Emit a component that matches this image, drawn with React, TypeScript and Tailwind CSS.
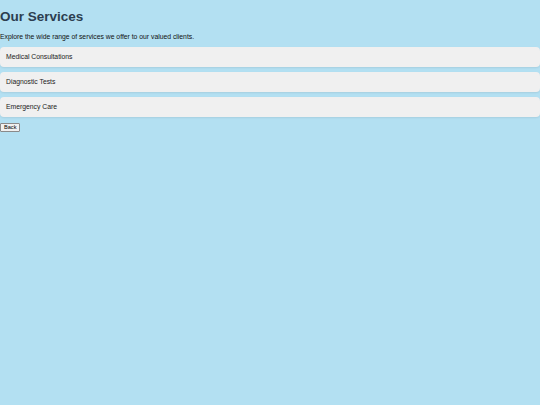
import React from "react";

export default function App() {
  const items = ["Medical Consultations", "Diagnostic Tests", "Emergency Care"];
  return (
    <div
      className="min-h-[405px] w-[540px] bg-[#b3e0f2] flex flex-col items-start"
      style={{ fontFamily: '"Liberation Sans", Arial, sans-serif' }}
    >
      <h1 className="mt-[9px] text-[13.5px] leading-[15.5px] font-bold text-[#2c3e50]">Our Services</h1>
      <p className="mt-[8.5px] text-[6.8px] leading-[7.7px] text-[#111]">
        Explore the wide range of services we offer to our valued clients.
      </p>
      <div className="mt-[6px] flex flex-col gap-[5px] self-stretch">
        {items.map((t) => (
          <div
            key={t}
            className="h-[20px] flex items-center px-[6px] rounded-[4px] bg-[#f0f0f0] text-[6.8px] text-[#222] shadow-[0_1px_2px_rgba(0,0,0,0.08)]"
          >
            {t}
          </div>
        ))}
      </div>
      <button className="mt-[6px] h-[9.5px] px-[3px] text-[5.6px] leading-[6px] bg-[#f0f0f0] border border-[#8a8a8a] rounded-[1px] text-black">
        Back
      </button>
    </div>
  );
}
